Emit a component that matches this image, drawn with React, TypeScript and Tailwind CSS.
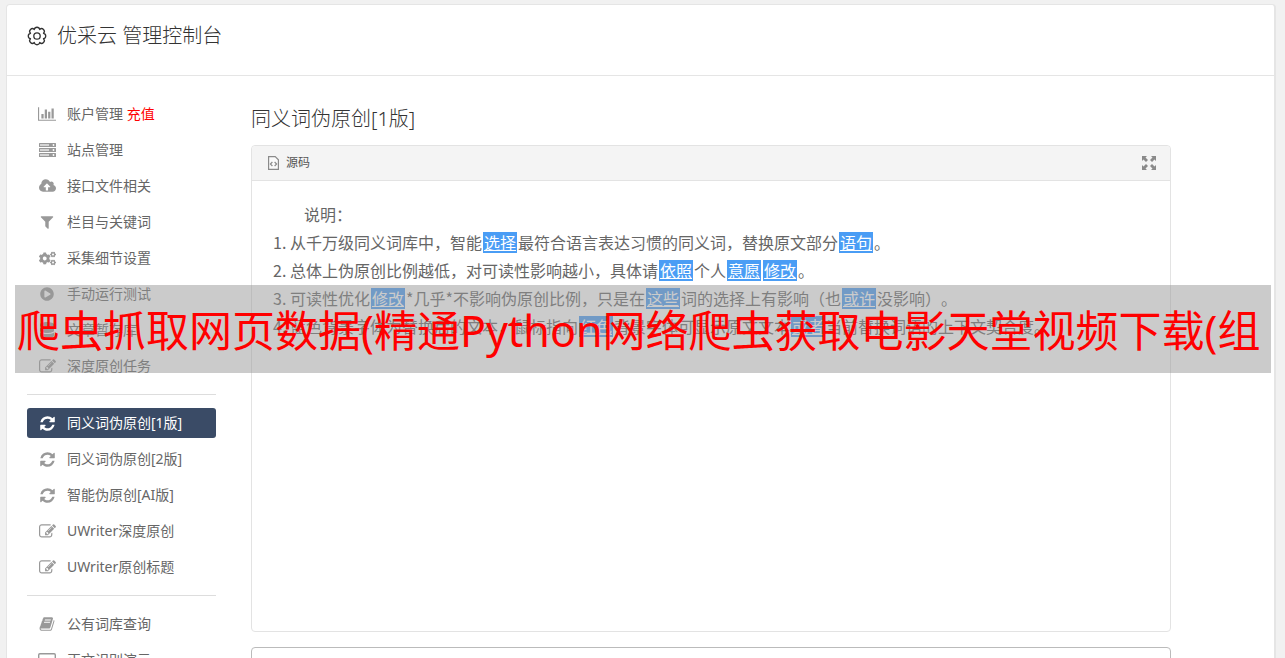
import type { ReactNode } from 'react';
import { FaCogs, FaDatabase, FaPlayCircle } from 'react-icons/fa';

interface NavItem {
    label: string;
    icon: ReactNode;
    extra?: string;
    active?: boolean;
}

/** Solid glyph drawn on the 1792 unit grid. */
function Glyph({ d, width = 1792, size = 'h-[17px] w-[17px]' }: { d: string; width?: number; size?: string }) {
    return (
        <svg viewBox={`0 0 ${width} 1792`} className={size} fill="currentColor" aria-hidden="true">
            <path d={d} />
        </svg>
    );
}

const BAR_CHART =
    'M640 896v512h-256v-512h256zm384-512v1024h-256v-1024h256zm1024 1152v128h-2048v-1536h128v1408h1920zm-640-896v768h-256v-768h256zm384-384v1152h-256v-1152h256z';
const CLOUD_UPLOAD =
    'M1280 992q0-14-9-23l-352-352q-9-9-23-9t-23 9l-351 351q-10 12-10 24 0 14 9 23t23 9h224v352q0 13 9.5 22.5t22.5 9.5h192q13 0 22.5-9.5t9.5-22.5v-352h224q13 0 22.5-9.5t9.5-22.5zm640 160q0 159-112.5 271.5t-271.5 112.5h-1088q-185 0-316.5-131.5t-131.5-316.5q0-130 70-240t188-165q-2-30-2-43 0-212 150-362t362-150q156 0 285.5 87t188.5 231q71-62 166-62 106 0 181 75t75 181q0 76-41 138 130 31 213.5 135.5t83.5 238.5z';
const FILTER =
    'M1595 295q17 41-14 70l-493 493v742q0 42-39 59-13 5-25 5-27 0-45-19l-256-256q-19-19-19-45v-486l-493-493q-31-29-14-70 17-39 59-39h1280q42 0 59 39z';
const EDIT =
    'M888 1184l116-116-152-152-116 116v56h96v96h56zm440-720q-16-16-33 1l-350 350q-17 17-1 33t33-1l350-350q17-17 1-33zm80 594v190q0 119-84.5 203.5t-203.5 84.5h-832q-119 0-203.5-84.5t-84.5-203.5v-832q0-119 84.5-203.5t203.5-84.5h832q63 0 117 25 15 7 18 23 3 17-9 29l-49 49q-14 14-32 8-23-6-45-6h-832q-66 0-113 47t-47 113v832q0 66 47 113t113 47h832q66 0 113-47t47-113v-126q0-13 9-22l64-64q15-15 35-7t20 29zm-96-738l288 288-672 672h-288v-288zm444 132l-92 92-288-288 92-92q28-28 68-28t68 28l152 152q28 28 28 68t-28 68z';
const REFRESH =
    'M1639 1056q0 5-1 7-64 268-268 434.5t-478 166.5q-146 0-282.5-55t-243.5-157l-129 129q-19 19-45 19t-45-19-19-45v-448q0-26 19-45t45-19h448q26 0 45 19t19 45-19 45l-137 137q71 66 161 102t187 36q134 0 250-65t186-179q11-17 53-117 8-23 30-23h192q13 0 22.5 9.5t9.5 22.5zm25-800v448q0 26-19 45t-45 19h-448q-26 0-45-19t-19-45 19-45l138-138q-148-137-349-137-134 0-250 65t-186 179q-11 17-53 117-8 23-30 23h-199q-13 0-22.5-9.5t-9.5-22.5v-7q65-268 270-434.5t480-166.5q146 0 284 55.5t245 156.5l130-129q19-19 45-19t45 19 19 45z';
const BOOK =
    'M1703 478q40 57 18 129l-275 906q-19 64-76.5 107.5t-122.5 43.5h-923q-77 0-148.5-53.5t-99.5-131.5q-24-67-2-127 0-4 3-27t4-37q1-8-3-21.5t-3-19.5q2-11 8-21t16.5-23.5 16.5-23.5q23-38 45-91.5t30-91.5q3-10 .5-30t-.5-28q3-11 17-28t17-23q21-36 42-92t25-90q1-9-2.5-32t.5-28q4-13 22-30.5t22-22.5q19-26 42.5-84.5t27.5-96.5q1-8-3-25.5t-2-26.5q2-8 9-18t18-23 17-21q8-12 16.5-30.5t15-35 16-36 19.5-32 26.5-23.5 36-11.5 47.5 5.5l-1 3q38-9 51-9h761q74 0 114 56t18 130l-274 906q-36 119-71.5 153.5t-128.5 34.5h-869q-27 0-38 15-11 16-1 43 24 70 144 70h923q29 0 56-15.5t35-41.5l300-987q7-22 5-57 38 15 59 43zm-1064 2q-4 13 2 22.5t20 9.5h608q13 0 25.5-9.5t16.5-22.5l21-64q4-13-2-22.5t-20-9.5h-608q-13 0-25.5 9.5t-16.5 22.5zm-83 256q-4 13 2 22.5t20 9.5h608q13 0 25.5-9.5t16.5-22.5l21-64q4-13-2-22.5t-20-9.5h-608q-13 0-25.5 9.5t-16.5 22.5z';

function GearIcon() {
    return (
        <svg viewBox="-10 -10 20 20" className="h-5 w-5" fill="none" stroke="currentColor" strokeWidth="1.3" strokeLinejoin="round" aria-hidden="true">
            <path d="M6.500 2.700A2.600 2.600 0 0 1 2.700 6.500 2.750 2.750 0 0 1-2.700 6.500 2.600 2.600 0 0 1-6.500 2.700 2.750 2.750 0 0 1-6.500-2.700 2.600 2.600 0 0 1-2.700-6.500 2.750 2.750 0 0 1 2.700-6.500 2.600 2.600 0 0 1 6.500-2.700 2.750 2.750 0 0 1 6.500 2.700z" />
            <circle r="3.2" />
        </svg>
    );
}

function ServerIcon() {
    return (
        <svg viewBox="0 0 17 14" className="h-[14px] w-[17px]" aria-hidden="true">
            {[0, 5, 10].map((y) => (
                <g key={y}>
                    <rect y={y} width="17" height="4" rx="0.5" fill="currentColor" />
                    <rect x="1" y={y + 1} width="9" height="2" fill="#d4d4d4" />
                    <circle cx="14.5" cy={y + 2} r="0.9" fill="#fff" />
                </g>
            ))}
        </svg>
    );
}

function ScreenIcon() {
    return (
        <svg viewBox="0 0 18 16" className="h-4 w-[18px]" fill="none" stroke="currentColor" strokeWidth="1.4" aria-hidden="true">
            <rect x="0.7" y="1.7" width="16.6" height="10" rx="1.2" />
            <path d="M5 15h8" />
        </svg>
    );
}

function SourceIcon() {
    return (
        <svg viewBox="0 0 11 14" className="h-[14px] w-[11px]" fill="none" stroke="#8a8a8a" aria-hidden="true">
            <path d="M.6.6h6.600l3.200 3.200v9.600H.6z" strokeWidth="1.2" fill="#fafafa" />
            <path d="M4.400 6 2.400 8l2 2M6.600 6l2 2-2 2" strokeWidth="1.2" />
        </svg>
    );
}

function MaximizeIcon() {
    return (
        <svg viewBox="0 0 14 14" className="h-[14px] w-[14px]" aria-hidden="true">
            <path d="M0 0h5L3.500 1.500 6 4 4 6 1.500 3.500 0 5zM14 0v5l-1.500-1.500L10 6 8 4l2.500-2.500L9 0zM0 14V9l1.500 1.500L4 8l2 2-2.500 2.500L5 14zM14 14H9l1.500-1.500L8 10l2-2 2.500 2.500L14 9z" fill="#8a8a8a" />
        </svg>
    );
}

const groups: NavItem[][] = [
    [
        { label: '账户管理', extra: '充值', icon: <Glyph d={BAR_CHART} width={2048} size="h-4 w-[18px]" /> },
        { label: '站点管理', icon: <ServerIcon /> },
        { label: '接口文件相关', icon: <Glyph d={CLOUD_UPLOAD} width={1920} size="h-4 w-[17px]" /> },
        { label: '栏目与关键词', icon: <Glyph d={FILTER} size="h-4 w-4" /> },
        { label: '采集细节设置', icon: <FaCogs className="h-[17px] w-[17px]" /> },
        { label: '手动运行测试', icon: <FaPlayCircle className="h-[14px] w-[14px]" /> },
        { label: '文章暂存库', icon: <FaDatabase className="h-4 w-[14px]" /> },
        { label: '深度原创任务', icon: <Glyph d={EDIT} /> },
    ],
    [
        { label: '同义词伪原创[1版]', icon: <Glyph d={REFRESH} />, active: true },
        { label: '同义词伪原创[2版]', icon: <Glyph d={REFRESH} /> },
        { label: '智能伪原创[AI版]', icon: <Glyph d={REFRESH} /> },
        { label: 'UWriter深度原创', icon: <Glyph d={EDIT} /> },
        { label: 'UWriter原创标题', icon: <Glyph d={EDIT} /> },
    ],
    [
        { label: '公有词库查询', icon: <Glyph d={BOOK} size="h-4 w-4" /> },
        { label: '正文识别演示', icon: <ScreenIcon /> },
    ],
];

function NavLink({ item }: { item: NavItem }) {
    const state = item.active ? 'bg-[#3a4b66] text-white' : 'text-[#666]';

    return (
        <a href="#" className={`flex h-[30px] items-center rounded-[3px] text-sm ${state}`}>
            <span className={`flex w-10 justify-center ${item.active ? 'text-white' : 'text-[#999]'}`}>{item.icon}</span>
            <span>
                {item.label}
                {item.extra && <span className="text-[#f00]"> {item.extra}</span>}
            </span>
        </a>
    );
}

/** A replaced word inside the editor text. */
function Word({ children }: { children: ReactNode }) {
    return <span className="mx-px inline-block h-[21px] bg-[#4a9df5] px-px leading-[21px] text-white underline">{children}</span>;
}

function Editor() {
    return (
        <div className="rounded border border-[#e3e3e3]">
            <div className="flex h-[35px] items-center justify-between rounded-t border-b border-[#e3e3e3] bg-[#f4f4f4] pr-[14px] pl-4">
                <button type="button" className="flex items-center gap-[7px] text-xs text-[#555]">
                    <SourceIcon />
                    源码
                </button>
                <button type="button" aria-label="全屏">
                    <MaximizeIcon />
                </button>
            </div>
            <div className="h-[450px] px-5 pt-[19px] font-['Noto_Sans_CJK_SC',sans-serif] text-base leading-7 text-[#666] [text-spacing-trim:space-all]">
                <p className="indent-8">说明：</p>
                <ol className="list-decimal pl-[18px]">
                    <li>
                        从千万级同义词库中，智能<Word>选择</Word>最符合语言表达习惯的同义词，替换原文部分<Word>语句</Word>。
                    </li>
                    <li>
                        总体上伪原创比例越低，对可读性影响越小，具体请<Word>依照</Word>个人<Word>意愿</Word>
                        <Word>修改</Word>。
                    </li>
                    <li>
                        可读性优化<Word>修改</Word>*几乎*不影响伪原创比例，只是在<Word>这些</Word>词的选择上有影响（也<Word>或许</Word>没影响）。
                    </li>
                    <li>
                        蓝色背景字体为替换后的文本，鼠标指向<Word>红色</Word>背景字体可显示原文文本<Word>或者</Word>当前替换词语的上下文契合度。
                    </li>
                </ol>
            </div>
        </div>
    );
}

export default function App() {
    return (
        <div className="relative h-screen overflow-hidden bg-[#f1f1f1] pt-1 pr-[9px] pl-[6px] font-['Noto_Sans','Noto_Sans_CJK_SC',sans-serif]">
            <div className="min-h-full rounded-t border-t border-r-2 border-l border-[#e5e5e5] bg-white">
                <header className="flex h-[71px] items-center gap-[10px] border-b border-[#e5e5e5] px-5 pb-2 text-[#333]">
                    <GearIcon />
                    <h1 className="text-xl font-light">优采云 管理控制台</h1>
                </header>

                <div className="flex gap-[35px] pt-[23px] pr-[103px] pl-5">
                    <nav className="w-[189px] shrink-0">
                        {groups.map((items, i) => (
                            <div key={i}>
                                {i > 0 && <hr className="my-[13px] border-[#ddd]" />}
                                <div className="flex flex-col gap-[6px]">
                                    {items.map((item) => (
                                        <NavLink key={item.label} item={item} />
                                    ))}
                                </div>
                            </div>
                        ))}
                    </nav>

                    <main className="min-w-0 flex-1 pt-[6px]">
                        <h2 className="mb-3 text-xl leading-7 font-light text-[#333]">同义词伪原创[1版]</h2>
                        <Editor />
                        <textarea aria-label="原文" className="mt-[15px] block h-[120px] w-full resize-none rounded border border-[#bbb] px-3 py-2" />
                    </main>
                </div>
            </div>

            <div className="absolute top-[285px] right-[14px] left-[15px] flex h-[88px] items-center overflow-hidden bg-[#979797]/50 pt-1 pl-[2px] text-[43px] whitespace-nowrap text-[#f00]">
                <p>爬虫抓取网页数据(精通Python网络爬虫获取电影天堂视频下载(组</p>
            </div>
        </div>
    );
}
